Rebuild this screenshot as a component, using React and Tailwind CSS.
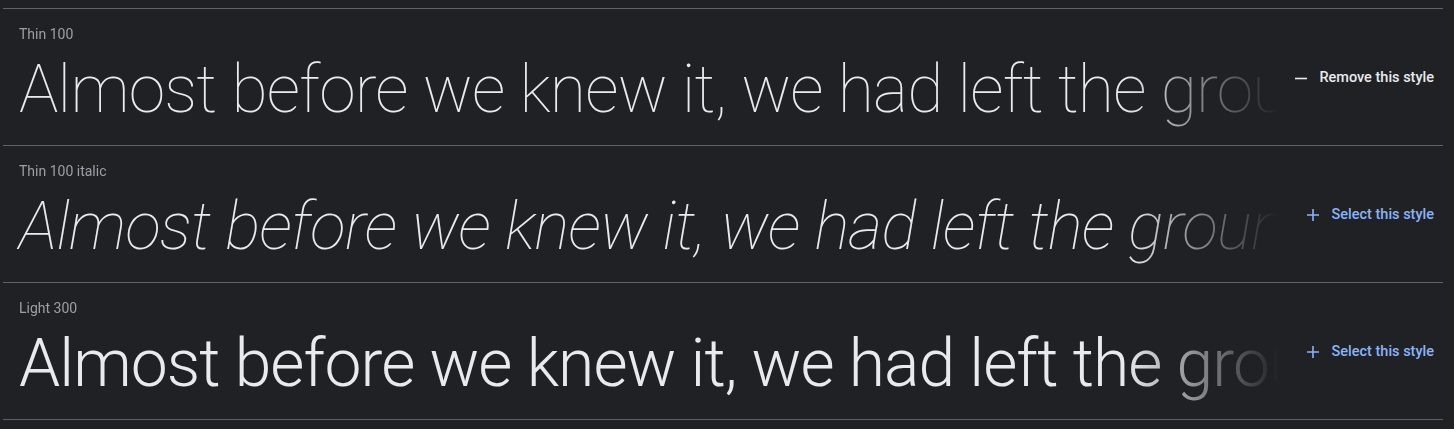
import React from 'react';

const SAMPLE = 'Almost before we knew it, we had left the ground.';

const styles = [
    { label: 'Thin 100', weight: 'font-thin tracking-[-0.8px]', italic: false, selected: true },
    { label: 'Thin 100 italic', weight: 'font-thin tracking-[-0.8px]', italic: true, selected: false },
    { label: 'Light 300', weight: 'font-light tracking-[-0.95px]', italic: false, selected: false },
];

const MinusIcon = () => (
    <svg width="12" height="12" viewBox="0 0 12 12" className="shrink-0">
        <path d="M0 6.5h12" stroke="currentColor" strokeWidth="1.6" />
    </svg>
);

const PlusIcon = () => (
    <svg width="12" height="12" viewBox="0 0 12 12" className="shrink-0">
        <path d="M0 6h12M6 0v12" stroke="currentColor" strokeWidth="1.6" />
    </svg>
);

const StyleRow = ({ label, weight, italic, selected }) => (
    <div className="flex items-center h-[137px] border-t border-[#5f6368]">
        <div className="w-[1276px] pl-4 overflow-hidden [mask-image:linear-gradient(to_right,#000_88%,transparent_100%)]">
            <div className="text-[14px] leading-5 text-[#9aa0a6] -mt-[1px]">{label}</div>
            <div
                className={`text-[66px] leading-[80px] mt-[6px] whitespace-nowrap text-[#e8eaed] ${weight} ${italic ? 'italic' : ''}`}
            >
                {SAMPLE}
            </div>
        </div>
        <div className="flex-1 flex justify-end pr-[9px] pt-[2px]">
            {selected ? (
                <button className="flex items-center gap-3 text-[14.5px] font-medium text-[#e8eaed]">
                    <MinusIcon />
                    <span>Remove this style</span>
                </button>
            ) : (
                <button className="flex items-center gap-3 text-[14.5px] font-medium text-[#8ab4f8]">
                    <PlusIcon />
                    <span>Select this style</span>
                </button>
            )}
        </div>
    </div>
);

export default function App() {
    return (
        <div className="min-h-screen bg-[#202124] pt-2 px-[3px] font-['Roboto',sans-serif] [&_*]:font-['Roboto',sans-serif]">
            <div className="border-b border-[#5f6368] w-[1440px]">
                {styles.map((s) => (
                    <StyleRow key={s.label} {...s} />
                ))}
            </div>
        </div>
    );
}
